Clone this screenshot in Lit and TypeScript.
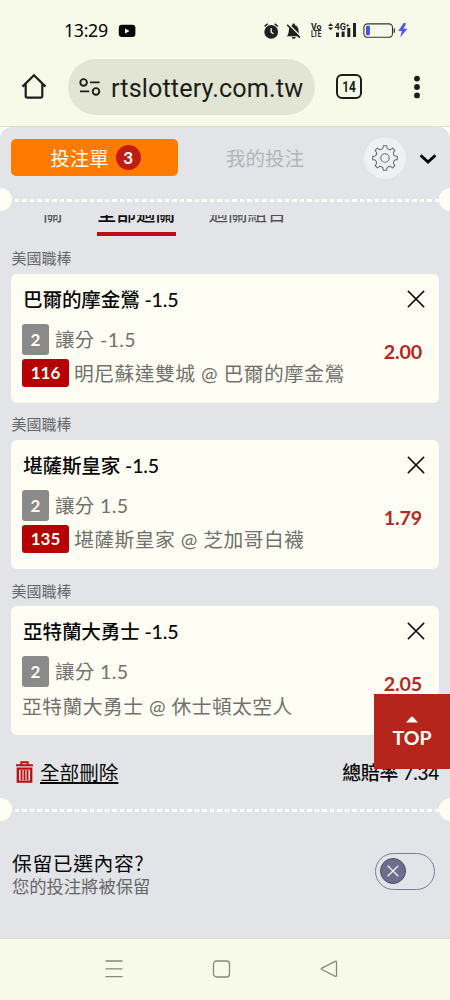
import { LitElement, html, css, svg } from "lit";
import { customElement, property, state } from "lit/decorators.js";
import { classMap } from "lit/directives/class-map.js";

interface Bet {
  league: string;
  title: string;
  market: string;
  code?: string;
  match: string;
  odds: string;
}

const BETS: Bet[] = [
  { league: "美國職棒", title: "巴爾的摩金鶯 -1.5", market: "讓分 -1.5", code: "116", match: "明尼蘇達雙城 @ 巴爾的摩金鶯", odds: "2.00" },
  { league: "美國職棒", title: "堪薩斯皇家 -1.5", market: "讓分 1.5", code: "135", match: "堪薩斯皇家 @ 芝加哥白襪", odds: "1.79" },
  { league: "美國職棒", title: "亞特蘭大勇士 -1.5", market: "讓分 1.5", match: "亞特蘭大勇士 @ 休士頓太空人", odds: "2.05" },
];

function gearPath(cx: number, cy: number, teeth: number, outer: number, inner: number): string {
  const step = (Math.PI * 2) / teeth;
  const p = (r: number, a: number) => `${(cx + r * Math.sin(a)).toFixed(2)} ${(cy - r * Math.cos(a)).toFixed(2)}`;
  let d = `M${p(outer, -0.13)}`;
  for (let i = 0; i < teeth; i++) {
    const a = i * step;
    d += ` L${p(outer, a + 0.13)} L${p(inner + 0.6, a + 0.21)} Q${p(inner - 0.6, a + step / 2)} ${p(inner + 0.6, a + step - 0.21)} L${p(outer, a + step - 0.13)}`;
  }
  return d + "Z";
}

@customElement("status-bar")
class StatusBar extends LitElement {
  static styles = css`
    :host { display: flex; align-items: center; height: 59px; box-sizing: border-box; padding: 3px 42px 0 64px; font-family: "Noto Sans", sans-serif; color: #161814; }
    .time { font-size: 17.800px; line-height: 24px; letter-spacing: -0.350px; color: #050505; width: 54px; white-space: nowrap; margin-top: -2px; }
    .spacer { flex: 1; }
    svg { display: block; flex: none; }
    .sys text { font-family: Roboto, sans-serif; font-weight: 700; fill: #20221d; }
  `;
  render() {
    return html`
      <span class="time">13:29</span>
      <svg width="18" height="14" viewBox="0 0 18 14"><rect x=".8" y=".8" width="16.6" height="12.2" rx="3" fill="#050505"/><path d="M7 4.6v4.8l4.6-2.4z" fill="#f7fae8"/></svg>
      <span class="spacer"></span>
      <svg class="sys" width="146" height="20" viewBox="262 21 146 20">
        <g fill="#20221d" stroke="none">
          <circle cx="271.2" cy="31.9" r="6.9"/>
          <path d="M264.6 26.4l3.2-2.7M277.8 26.4l-3.2-2.7" stroke="#20221d" stroke-width="1.5"/>
          <path d="M271.2 28.2v4l2.3 1.6" stroke="#f7fae8" stroke-width="1.4" fill="none"/>
          <path d="M286.800 36.200c2-1.800 1.700-4.300 2.200-7 .4-2.300 1.900-3.500 3.400-3.900v-.8c0-1.500 2.600-1.500 2.600 0v.8c1.900.5 3.500 2.200 3.600 5.200 0 2.200.2 4.100 2 5.700z"/>
          <path d="M291.800 36.900h3.900c-.4 2.500-3.500 2.500-3.900 0z"/>
          <path d="M288.300 24l13 13" stroke="#f7fae8" stroke-width="1.400"/>
          <path d="M287.100 24.800l12.800 12.800" stroke="#20221d" stroke-width="1.600"/>
          <path d="M328 26l2.600-2.700 2.600 2.700zM328 27.600h5.200l-2.600 2.700z"/>
          <rect x="336" y="32.500" width="3" height="4.500"/><rect x="341.600" y="31.500" width="3" height="5.500"/><rect x="347.300" y="28" width="3" height="9"/><rect x="353" y="23" width="3" height="14"/>
        </g>
        <text x="311" y="29.600" font-size="8.600" textLength="10.500" lengthAdjust="spacingAndGlyphs">Vo</text>
        <text x="311" y="37.400" font-size="8.600" textLength="10.500" lengthAdjust="spacingAndGlyphs">LTE</text>
        <text x="334.500" y="29.600" font-size="9.200" textLength="15" lengthAdjust="spacingAndGlyphs">4G⁺</text>
        <rect x="363.900" y="23.900" width="28.600" height="13.400" rx="3.600" fill="none" stroke="#33352f" stroke-width="1.100"/>
        <rect x="366" y="25.800" width="3.900" height="9.400" rx="1" fill="#4252e8"/>
        <rect x="393.600" y="28.400" width="1.300" height="4.400" fill="#33352f"/>
        <path d="M403.800 22.800l-5.600 8.300h3.600l-1.600 6.300 7.300-8.700h-3.900l2.600-5.200z" fill="#4f5bea"/>
      </svg>
    `;
  }
}

@customElement("browser-bar")
class BrowserBar extends LitElement {
  static styles = css`
    :host { display: flex; align-items: center; height: 68px; box-sizing: border-box; padding: 0 25px 12px 21px; color: #1c1e18; font-family: Roboto, sans-serif; border-bottom: 1px solid #dcdfd0; }
    svg { display: block; flex: none; }
    .pill { display: flex; align-items: center; box-sizing: border-box; width: 247px; height: 56px; margin-left: 21px; padding-left: 11px; border-radius: 28px; background: #e2e5d3; white-space: nowrap; overflow: hidden; }
    .url { font-size: 25.200px; line-height: 30px; margin: 4px 0 0 10px; letter-spacing: 0.120px; }
    .tabs { box-sizing: border-box; width: 26px; height: 25px; border: 2.200px solid #1c1e18; border-radius: 6px; margin-left: 21px; }
    .tabs text { font-size: 14.500px; font-weight: 700; fill: #1c1e18; }
    .dots { margin-left: auto; }
  `;
  render() {
    return html`
      <svg width="26" height="27" viewBox="0 0 26 27"><path d="M1.500 13.600L13 2.300l11.500 11.300M4.700 11.500V23a1.600 1.600 0 0 0 1.600 1.600h13.400a1.600 1.600 0 0 0 1.600-1.600V11.500" fill="none" stroke="#1c1e18" stroke-width="2.200"/></svg>
      <div class="pill">
        <svg width="22" height="18" viewBox="0 0 22 18" fill="none" stroke="#1c1e18" stroke-width="1.900"><circle cx="4.600" cy="4.400" r="3.300"/><path d="M11 4.400h9.600M1 13.400h9.200"/><circle cx="17" cy="13.400" r="3.300"/></svg>
        <span class="url">rtslottery.com.tw</span>
      </div>
      <div class="tabs"><svg width="22" height="21" viewBox="0 0 22 21"><text x="4.200" y="15.600" textLength="13.600" lengthAdjust="spacingAndGlyphs">14</text></svg></div>
      <svg class="dots" width="16" height="26" viewBox="0 0 16 26" fill="#1c1e18"><circle cx="8" cy="4.600" r="2.900"/><circle cx="8" cy="13" r="2.900"/><circle cx="8" cy="21.400" r="2.900"/></svg>
    `;
  }
}

@customElement("ticket-divider")
class TicketDivider extends LitElement {
  static styles = css`
    :host { display: flex; align-items: center; justify-content: space-between; height: 24px; overflow: hidden; flex: none; }
    .notch { width: 23px; height: 23px; border-radius: 50%; background: #fffef4; flex: none; }
    .left { margin-left: -11.500px; }
    .right { margin-right: -11.500px; }
    .line { flex: 1; height: 3px; margin-top: 2px; background: repeating-linear-gradient(90deg, transparent 0 2.600px, #fffef4 2.600px 7.500px); }
  `;
  render() {
    return html`<span class="notch left"></span><span class="line"></span><span class="notch right"></span>`;
  }
}

@customElement("bet-card")
class BetCard extends LitElement {
  @property({ attribute: false }) bet!: Bet;
  static styles = css`
    :host { display: block; height: 166.300px; font-family: Lato, "Noto Sans CJK TC", sans-serif; white-space: nowrap; }
    .league { height: 25.700px; line-height: 20px; font-size: 15px; color: #66676a; padding-left: 0.500px; }
    .card { display: flex; justify-content: space-between; box-sizing: border-box; height: 129px; border-radius: 6px; background: #fffef4; padding: 11px 11px 0 11px; }
    .title { height: 30px; line-height: 30px; font-size: 19.600px; font-weight: 500; color: #080808; margin-left: 1px; letter-spacing: -0.150px; }
    .market, .match { display: flex; align-items: center; color: #71716d; }
    .market { height: 31px; margin-top: 9px; font-size: 19.500px; letter-spacing: 0.350px; }
    .match { height: 28px; margin-top: 4px; font-size: 19.800px; letter-spacing: 0.450px; }
    .market .text { margin-top: -2px; }
    .no { display: flex; align-items: center; justify-content: center; width: 27px; height: 31px; border-radius: 3px; background: #8a8a8a; color: #fffef4; font-weight: 700; font-size: 17px; margin-right: 6px; letter-spacing: 0; }
    .code { display: flex; align-items: center; justify-content: center; width: 47px; height: 28px; border-radius: 3px; background: #b50202; color: #fffef4; font-weight: 700; font-size: 17px; margin-right: 5px; letter-spacing: 0; }
    .side { display: flex; flex-direction: column; align-items: flex-end; }
    .close { display: block; margin: 5px 3px 0 0; }
    .odds { font-size: 19.700px; line-height: 26px; font-weight: 700; color: #b5281f; margin: 31px 6px 0 0; letter-spacing: -0.200px; }
  `;
  render() {
    const b = this.bet;
    return html`
      <div class="league">${b.league}</div>
      <div class="card">
        <div>
          <div class="title">${b.title}</div>
          <div class="market"><span class="no">2</span><span class="text">${b.market}</span></div>
          <div class="match">${b.code ? html`<span class="code">${b.code}</span>` : ""}<span class="text">${b.match}</span></div>
        </div>
        <div class="side">
          <svg class="close" width="18" height="18" viewBox="0 0 18 18"><path d="M.9.900l16.200 16.200M17.100.900L.9 17.100" stroke="#111" stroke-width="1.500"/></svg>
          <div class="odds">${b.odds}</div>
        </div>
      </div>
    `;
  }
}

@customElement("app-root")
class AppRoot extends LitElement {
  @state() private keep = false;

  static styles = css`
    :host { display: flex; flex-direction: column; position: relative; width: 450px; height: 1000px; overflow: hidden; background: #f7fae8; font-family: Lato, "Noto Sans CJK TC", sans-serif; white-space: nowrap; }
    svg { display: block; flex: none; }
    .page { height: 811px; flex: none; background: #fbfcf3; }
    .sheet { height: 811px; background: #e3e4e7; border-radius: 12px 12px 0 0; display: flex; flex-direction: column; }
    .head { display: flex; align-items: center; height: 60px; padding-left: 11px; flex: none; }
    .slip { display: flex; align-items: center; justify-content: center; box-sizing: border-box; width: 167px; height: 37px; margin-top: 1px; padding-left: 2px; border-radius: 5px; background: #ff7a00; color: #fffef4; font-size: 19.500px; gap: 7px; }
    .count { display: flex; align-items: center; justify-content: center; width: 25px; height: 25px; border-radius: 50%; background: #c11c12; font-size: 17px; font-weight: 700; }
    .mine { margin: 1px 0 0 48px; width: 138px; color: #b4b5b7; font-size: 19.500px; }
    .gear { display: flex; width: 42px; height: 42px; border-radius: 50%; background: #eff0f3; align-items: center; justify-content: center; margin-top: 1px; }
    .chev { margin: 3px 0 0 13px; }
    .tabs { display: flex; align-items: flex-end; margin: 4px 0 0; height: 21px; overflow: hidden; padding-left: 43px; font-size: 19.500px; color: #505154; flex: none; }
    .tab { display: block; height: 36px; line-height: 28px; }
    .on { box-sizing: border-box; width: 79px; margin: 0 33px 0 34px; text-align: center; font-weight: 500; color: #101010; border-bottom: 4px solid #b80f12; }
    .bets { padding: 12px 11px 0; flex: none; }
    .sum { display: flex; align-items: center; height: 26px; padding: 0 11px 0 15px; font-size: 19.600px; color: #080808; margin-top: 12px; flex: none; }
    .clear { margin-left: 6px; text-decoration: underline; text-decoration-thickness: 1.500px; text-underline-offset: 2px; }
    .total { margin-left: auto; font-size: 18.900px; font-weight: 500; letter-spacing: -0.250px; }
    .low { margin-top: 13px; }
    .keep { display: flex; align-items: center; justify-content: space-between; padding: 28px 15px 0 12px; }
    .ktitle { font-family: "Noto Sans CJK TC", sans-serif; font-size: 19.800px; line-height: 26px; letter-spacing: 0.600px; color: #080808; }
    .ksub { font-size: 17.300px; line-height: 22px; color: #66676a; }
    .toggle { box-sizing: border-box; width: 60px; height: 37px; border: 1.500px solid #7d7c98; border-radius: 19px; padding: 0 4px; display: flex; align-items: center; margin-top: -5px; }
    .toggle.active { justify-content: flex-end; }
    .knob { display: flex; align-items: center; justify-content: center; box-sizing: border-box; width: 26px; height: 26px; border-radius: 50%; background: #6e6d8b; border: 1.500px solid #4b4972; }
    .nav { box-sizing: border-box; height: 62px; border-top: 1px solid #dcdfd0; display: flex; align-items: center; padding: 0 0 2px 105px; }
    .top { position: absolute; right: 0; top: 694px; width: 76px; height: 75px; background: #b5251c; color: #fffef4; display: flex; flex-direction: column; align-items: center; font-size: 19.500px; line-height: 24px; font-weight: 700; }
    .top svg { margin: 22px 0 3px; }
    .square { margin-left: 89px; }
    .back { margin-left: 89px; }
  `;

  render() {
    return html`
      <status-bar></status-bar>
      <browser-bar></browser-bar>
      <div class="page"><div class="sheet">
        <div class="head">
          <div class="slip"><span>投注單</span><span class="count">3</span></div>
          <div class="mine">我的投注</div>
          <div class="gear"><svg width="28" height="28" viewBox="0 0 28 28" fill="none" stroke="#6b6c70" stroke-width="1.100" stroke-linejoin="round">${svg`<path d=${gearPath(14, 14, 8, 12.4, 9.4)} />`}<circle cx="14" cy="14" r="4.200"/></svg></div>
          <svg class="chev" width="18" height="12" viewBox="0 0 18 12"><path d="M1.600 2.200L9 9l7.400-6.800" fill="none" stroke="#050505" stroke-width="2.800"/></svg>
        </div>
        <ticket-divider></ticket-divider>
        <div class="tabs"><span class="tab">關</span><span class="tab on">全部過關</span><span class="tab">過關組合</span></div>
        <div class="bets">${BETS.map((b) => html`<bet-card .bet=${b}></bet-card>`)}</div>
        <div class="sum">
          <svg width="19" height="22" viewBox="0 0 19 22"><path d="M1 4.300h17M6.300 3.800V1.300h6.400v2.500" fill="none" stroke="#c00d12" stroke-width="1.900"/><path d="M2.800 7.600h13.400v13H2.800z" fill="none" stroke="#c00d12" stroke-width="2.300"/><path d="M6.500 9v10M9.500 9v10M12.500 9v10" stroke="#c00d12" stroke-width="1.800"/></svg>
          <span class="clear">全部刪除</span>
          <span class="total">總賠率 7.34</span>
        </div>
        <ticket-divider class="low"></ticket-divider>
        <div class="keep">
          <div><div class="ktitle">保留已選內容?</div><div class="ksub">您的投注將被保留</div></div>
          <div class=${classMap({ toggle: true, active: this.keep })} @click=${() => (this.keep = !this.keep)}>
            <span class="knob"><svg width="12" height="12" viewBox="0 0 12 12"><path d="M.7.700l10.600 10.600M11.300.700L.7 11.300" stroke="#f3f3f8" stroke-width="1.300"/></svg></span>
          </div>
        </div>
      </div></div>
      <div class="nav">
        <svg width="18" height="18" viewBox="0 0 18 18"><path d="M.5 1h17M.5 8.800h17M.5 16.600h17" stroke="#85887a" stroke-width="1.300"/></svg>
        <svg class="square" width="19" height="18" viewBox="0 0 19 18"><rect x="1.500" y="1" width="16" height="16" rx="3" fill="none" stroke="#85887a" stroke-width="1.300"/></svg>
        <svg class="back" width="18" height="18" viewBox="0 0 18 18"><path d="M15.300 1.300L1.900 8.100q-1.200.7 0 1.400l13.400 6.800q1.200.4 1.200-.8V2.100q0-1.200-1.200-.8z" fill="none" stroke="#85887a" stroke-width="1.300"/></svg>
      </div>
      <div class="top"><svg width="12" height="7" viewBox="0 0 12 7"><path d="M0 6.500L5 .900q1-.8 2 0l5 5.600z" fill="#fffef4"/></svg>TOP</div>
    `;
  }
}
